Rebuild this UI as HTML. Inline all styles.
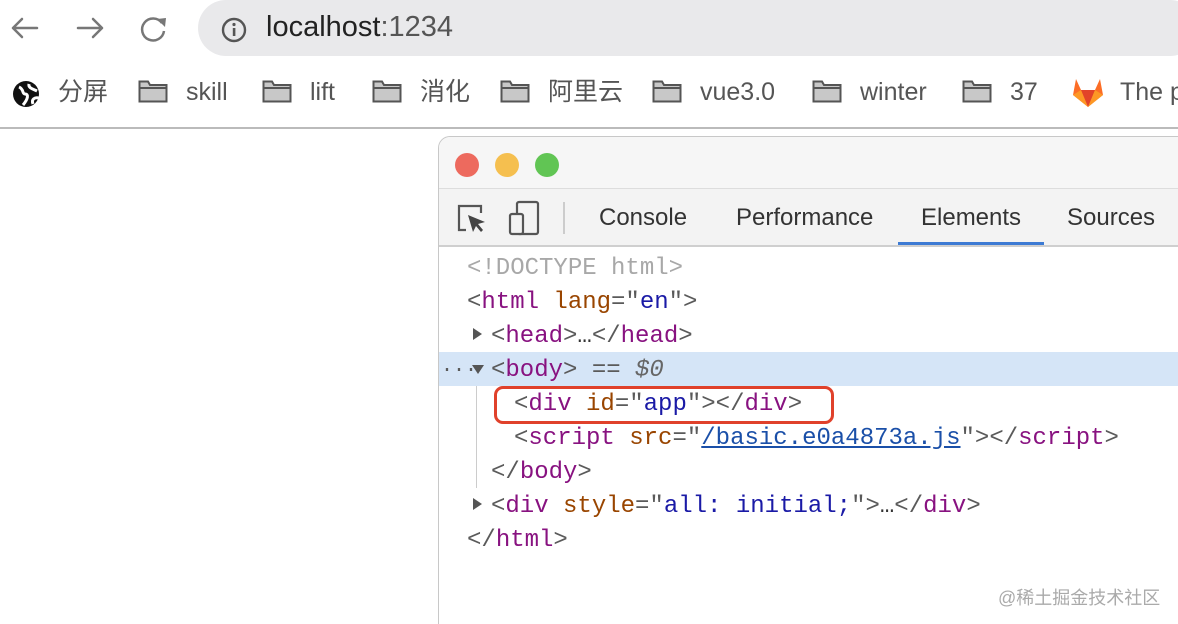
<!DOCTYPE html>
<html style="overflow:hidden;height:624px"><head><style>
body{margin:0;width:1178px;height:624px;background:#fff;position:relative;overflow:hidden;font-family:"Liberation Sans","Noto Sans CJK SC",sans-serif}
.a{position:absolute;white-space:nowrap}
.bm{position:absolute;top:77px;font-size:25px;color:#555;line-height:30px;white-space:nowrap}
.fold{position:absolute;top:80px;width:28px;height:21px}
.code{position:absolute;font-family:"Liberation Mono",monospace;font-size:24px;line-height:34px;white-space:pre;color:#881280}
.at{color:#994500}.v{color:#1a1aa6}.g{color:#a8a8a8}.p{color:#5a5a5a}
.tab{position:absolute;top:204px;font-size:24px;color:#333;white-space:nowrap}
</style></head><body>
<svg class="a" style="left:10px;top:14px" width="150" height="30" viewBox="0 0 150 30">
<g fill="none" stroke="#777" stroke-width="2.5" stroke-linecap="round" stroke-linejoin="round">
<path d="M3 14H27M3 14L12 5M3 14L12 23"/>
<path d="M68 14H92M92 14L83 5M92 14L83 23"/>
</g></svg>
<svg class="a" style="left:138px;top:13px" width="32" height="32" viewBox="0 0 32 32"><path d="M24 10A11 11 0 1 0 26 18" fill="none" stroke="#777" stroke-width="2.5"/><path d="M19 6L28 5L27 14Z" fill="#777"/></svg>
<div class="a" style="left:198px;top:0;width:1000px;height:56px;background:#e9e9eb;border-radius:28px"></div>
<svg class="a" style="left:220px;top:16px" width="28" height="28" viewBox="0 0 28 28"><circle cx="14" cy="14" r="11" fill="none" stroke="#555" stroke-width="2.4"/><rect x="12.8" y="12" width="2.6" height="8" fill="#555"/><circle cx="14" cy="8.5" r="1.6" fill="#555"/></svg>
<div class="a" style="left:266px;top:11px;font-size:29px;color:#222">localhost<span style="color:#555">:1234</span></div>
<svg class="a" style="left:11px;top:79px" width="30" height="30" viewBox="0 0 30 30"><circle cx="15" cy="15" r="13" fill="#111"/><path d="M8 8C13 10 11 15 14 15C18 15 17 20 12 26M18 5C17 9 22 10 26 12M22 25C20 20 24 18 28 19" stroke="#fff" stroke-width="3" fill="none"/></svg>
<div class="bm" style="left:58px">分屏</div>
<div class="fold" style="left:138px"><svg width="30" height="23" viewBox="0 0 30 23"><path d="M1.5 3V21.5H28.5V5H12L10 1.5H1.5Z" fill="#c8c8c8" stroke="#555" stroke-width="2"/><path d="M1.5 8H28.5" stroke="#555" stroke-width="2"/></svg></div>
<div class="bm" style="left:186px">skill</div>
<div class="fold" style="left:262px"><svg width="30" height="23" viewBox="0 0 30 23"><path d="M1.5 3V21.5H28.5V5H12L10 1.5H1.5Z" fill="#c8c8c8" stroke="#555" stroke-width="2"/><path d="M1.5 8H28.5" stroke="#555" stroke-width="2"/></svg></div>
<div class="bm" style="left:310px">lift</div>
<div class="fold" style="left:372px"><svg width="30" height="23" viewBox="0 0 30 23"><path d="M1.5 3V21.5H28.5V5H12L10 1.5H1.5Z" fill="#c8c8c8" stroke="#555" stroke-width="2"/><path d="M1.5 8H28.5" stroke="#555" stroke-width="2"/></svg></div>
<div class="bm" style="left:420px">消化</div>
<div class="fold" style="left:500px"><svg width="30" height="23" viewBox="0 0 30 23"><path d="M1.5 3V21.5H28.5V5H12L10 1.5H1.5Z" fill="#c8c8c8" stroke="#555" stroke-width="2"/><path d="M1.5 8H28.5" stroke="#555" stroke-width="2"/></svg></div>
<div class="bm" style="left:548px">阿里云</div>
<div class="fold" style="left:652px"><svg width="30" height="23" viewBox="0 0 30 23"><path d="M1.5 3V21.5H28.5V5H12L10 1.5H1.5Z" fill="#c8c8c8" stroke="#555" stroke-width="2"/><path d="M1.5 8H28.5" stroke="#555" stroke-width="2"/></svg></div>
<div class="bm" style="left:700px">vue3.0</div>
<div class="fold" style="left:812px"><svg width="30" height="23" viewBox="0 0 30 23"><path d="M1.5 3V21.5H28.5V5H12L10 1.5H1.5Z" fill="#c8c8c8" stroke="#555" stroke-width="2"/><path d="M1.5 8H28.5" stroke="#555" stroke-width="2"/></svg></div>
<div class="bm" style="left:860px">winter</div>
<div class="fold" style="left:962px"><svg width="30" height="23" viewBox="0 0 30 23"><path d="M1.5 3V21.5H28.5V5H12L10 1.5H1.5Z" fill="#c8c8c8" stroke="#555" stroke-width="2"/><path d="M1.5 8H28.5" stroke="#555" stroke-width="2"/></svg></div>
<div class="bm" style="left:1010px">37</div>
<svg class="a" style="left:1071px;top:76px" width="34" height="32" viewBox="0 0 34 32"><path d="M17 31L2 19L5 3L10 14H24L29 3L32 19Z" fill="#fc6d26"/><path d="M17 31L10 14H24Z" fill="#e24329"/><path d="M2 19L10 14L17 31Z M32 19L24 14L17 31Z" fill="#fca326" opacity=".8"/></svg>
<div class="bm" style="left:1120px">The p</div>
<div class="a" style="left:0;top:127px;width:1178px;height:2px;background:#bbb"></div>
<div class="a" style="left:438px;top:136px;width:760px;height:488px;border-left:1px solid #c8c8c8;border-top:1px solid #c8c8c8;border-radius:12px 0 0 0;background:#fff;overflow:hidden">
 <div class="a" style="left:0;top:0;width:760px;height:52px;background:#f6f6f6"></div>
 <div class="a" style="left:16px;top:16px;width:24px;height:24px;border-radius:50%;background:#ed6a5e"></div>
 <div class="a" style="left:56px;top:16px;width:24px;height:24px;border-radius:50%;background:#f5bf4f"></div>
 <div class="a" style="left:96px;top:16px;width:24px;height:24px;border-radius:50%;background:#61c554"></div>
 <div class="a" style="left:0;top:51px;width:760px;height:56px;background:#f3f3f3;border-top:1px solid #ddd;border-bottom:2px solid #cfcfcf"></div>
</div>
<svg class="a" style="left:456px;top:203px" width="32" height="32" viewBox="0 0 32 32"><path d="M10 27H3V3H25V10" fill="none" stroke="#555" stroke-width="2.2"/><path d="M12 12L29 19L22 21L27 27L25 29L20 23L17 29Z" fill="#444"/></svg>
<svg class="a" style="left:508px;top:200px" width="34" height="36" viewBox="0 0 34 36"><rect x="9" y="2" width="21" height="32" rx="2" fill="none" stroke="#555" stroke-width="2.2"/><rect x="2" y="14" width="13" height="20" rx="2" fill="#f3f3f3" stroke="#555" stroke-width="2.2"/></svg>
<div class="a" style="left:563px;top:202px;width:2px;height:32px;background:#ccc"></div>
<div class="tab" style="left:599px">Console</div>
<div class="tab" style="left:736px">Performance</div>
<div class="tab" style="left:921px">Elements</div>
<div class="tab" style="left:1067px">Sources</div>
<div class="a" style="left:898px;top:242px;width:146px;height:3px;background:#3d7bd4"></div>
<div class="a" style="left:439px;top:352px;width:739px;height:34px;background:#d5e5f7"></div>
<div class="a" style="left:476px;top:386px;width:1px;height:102px;background:#ccc"></div>
<div class="code g" style="left:467px;top:252px">&lt;!DOCTYPE html&gt;</div>
<div class="code" style="left:467px;top:286px"><span class="p">&lt;</span>html <span class="at">lang</span><span class="p">="</span><span class="v">en</span><span class="p">"&gt;</span></div>
<div class="a" style="left:473px;top:328px;border-left:9px solid #555;border-top:6px solid transparent;border-bottom:6px solid transparent"></div>
<div class="code" style="left:491px;top:320px"><span class="p">&lt;</span>head<span class="p">&gt;</span><span style="color:#333">…</span><span class="p">&lt;/</span>head<span class="p">&gt;</span></div>
<div class="code p" style="left:441px;top:354px;font-size:20px">···</div>
<div class="a" style="left:472px;top:365px;border-top:9px solid #555;border-left:6px solid transparent;border-right:6px solid transparent"></div>
<div class="code" style="left:491px;top:354px"><span class="p">&lt;</span>body<span class="p">&gt;</span><span class="p"> == </span><i style="color:#666">$0</i></div>
<div class="code" style="left:514px;top:388px"><span class="p">&lt;</span>div <span class="at">id</span><span class="p">="</span><span class="v">app</span><span class="p">"&gt;&lt;/</span>div<span class="p">&gt;</span></div>
<div class="a" style="left:494px;top:386px;width:334px;height:32px;border:3px solid #e0412b;border-radius:9px"></div>
<div class="code" style="left:514px;top:422px"><span class="p">&lt;</span>script <span class="at">src</span><span class="p">="</span><span style="color:#1a4fa8;text-decoration:underline">/basic.e0a4873a.js</span><span class="p">"&gt;&lt;/</span>script<span class="p">&gt;</span></div>
<div class="code" style="left:491px;top:456px"><span class="p">&lt;/</span>body<span class="p">&gt;</span></div>
<div class="a" style="left:473px;top:498px;border-left:9px solid #555;border-top:6px solid transparent;border-bottom:6px solid transparent"></div>
<div class="code" style="left:491px;top:490px"><span class="p">&lt;</span>div <span class="at">style</span><span class="p">="</span><span class="v">all: initial;</span><span class="p">"&gt;</span><span style="color:#333">…</span><span class="p">&lt;/</span>div<span class="p">&gt;</span></div>
<div class="code" style="left:467px;top:524px"><span class="p">&lt;/</span>html<span class="p">&gt;</span></div>
<div class="a" style="left:998px;top:584px;font-size:18px;color:#aaa">@稀土掘金技术社区</div>
</body></html>
